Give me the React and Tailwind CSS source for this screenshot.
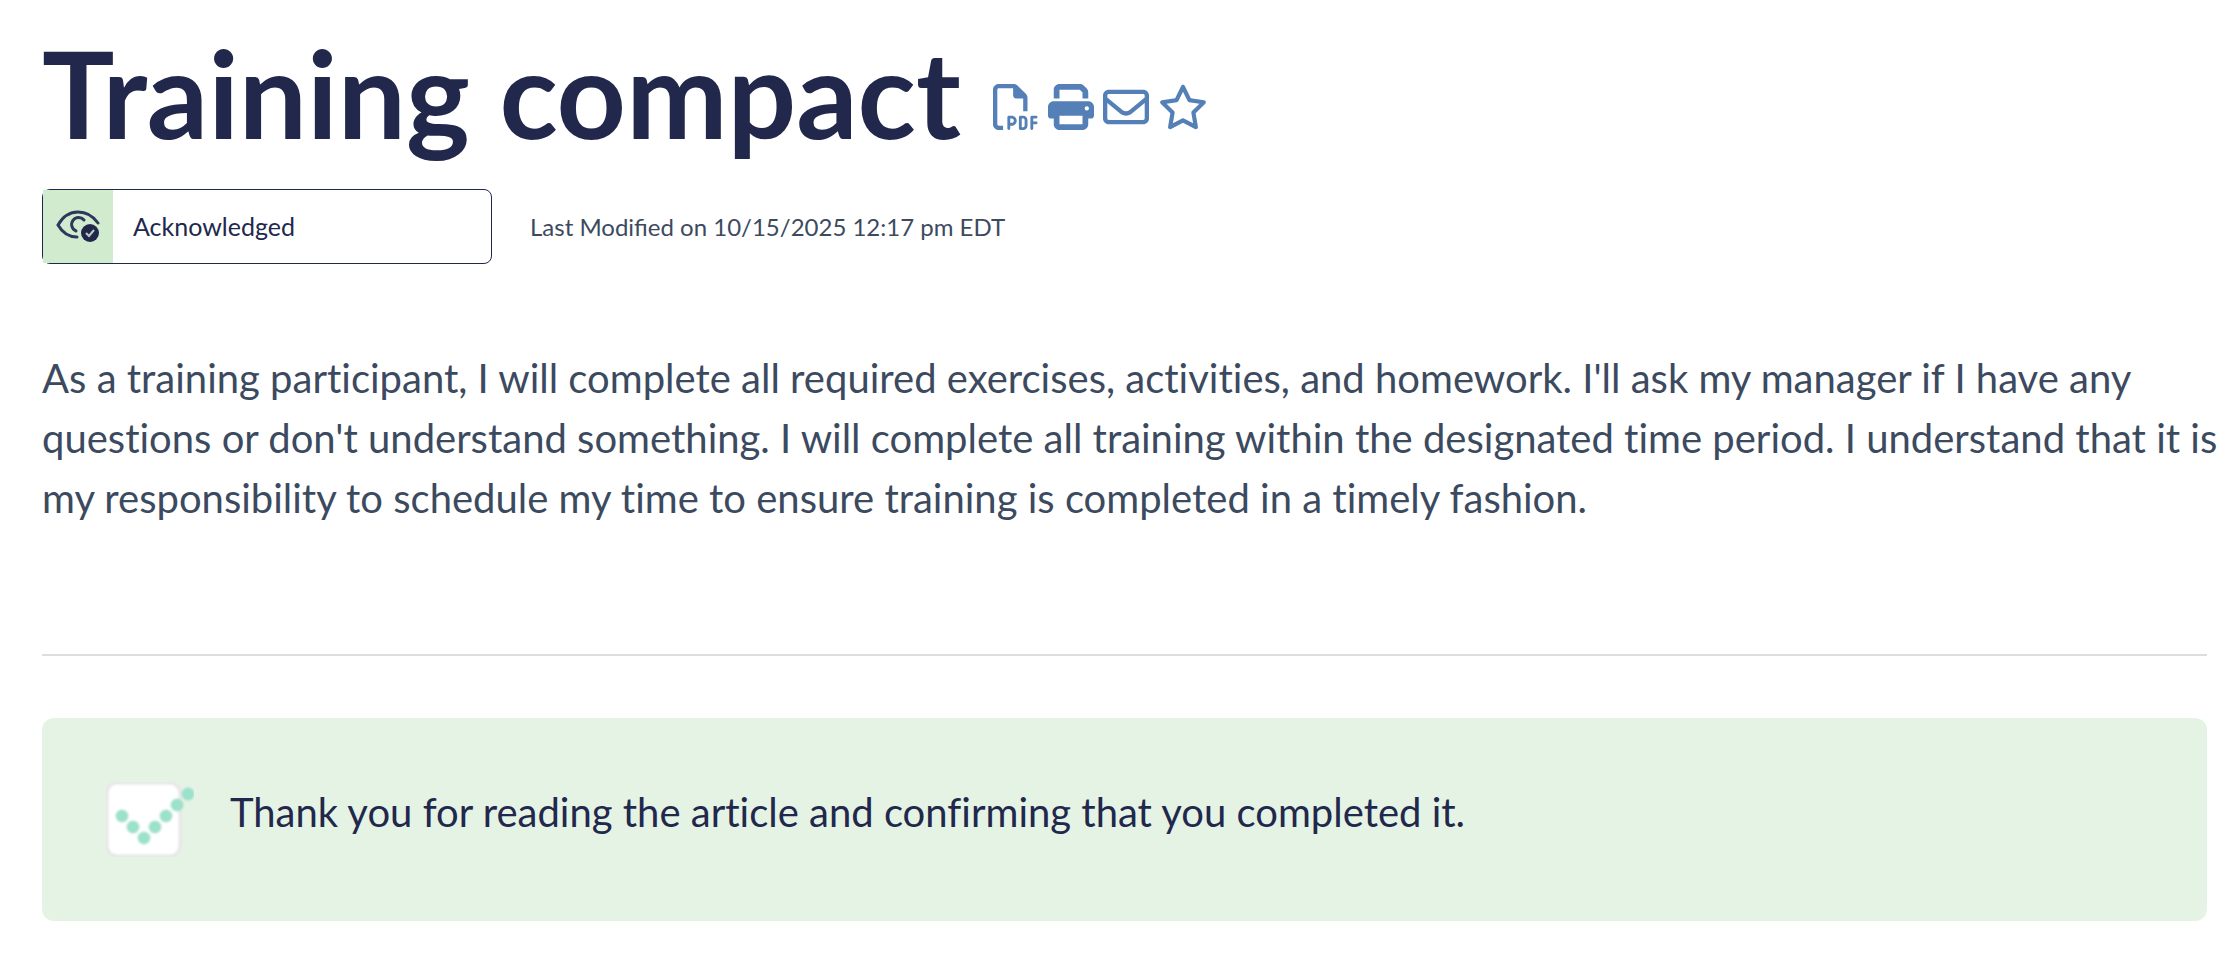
import React from 'react';
import { FaPrint, FaRegEnvelope, FaRegFilePdf, FaRegStar } from 'react-icons/fa6';

const actions = [
  { label: 'Download PDF', icon: FaRegFilePdf, size: 'w-[46px] h-[46px]' },
  { label: 'Print', icon: FaPrint, size: 'w-[46px] h-[46px]' },
  { label: 'Email', icon: FaRegEnvelope, size: 'w-[46px] h-[46px]' },
  { label: 'Add to favorites', icon: FaRegStar, size: 'w-[50px] h-[46px]' },
];

const EyeCheckIcon = () => (
  <svg width="44" height="34" viewBox="0 0 44 34" fill="none" aria-hidden="true">
    <defs>
      <filter id="eye-soft">
        <feGaussianBlur stdDeviation="0.6" />
      </filter>
    </defs>
    <g filter="url(#eye-soft)">
      <g stroke="#2f375b" strokeWidth="3" strokeLinecap="round">
        <path d="M42 13C37 6 30 2 22 2C13 2 6 8 2 15C6 22 13 27 21 27" />
        <path d="M28 10A7 7 0 1 0 20 21" />
      </g>
      <circle cx="34" cy="23" r="9" fill="#22284c" />
      <path d="M30 23L33 26L38 20" stroke="#b5cfc0" strokeWidth="2" />
    </g>
  </svg>
);

const checkDots = [
  [16, 34],
  [27, 45],
  [38, 56],
  [49, 45],
  [60, 34],
  [71, 23],
  [82, 12],
];

const CheckboxIcon = () => (
  <svg width="88" height="75" viewBox="0 0 88 75" className="shrink-0" aria-hidden="true">
    <defs>
      <filter id="check-soft">
        <feGaussianBlur stdDeviation="0.9" />
      </filter>
    </defs>
    <g filter="url(#check-soft)">
      <rect x="1" y="1" width="73" height="73" rx="10" fill="#fff" stroke="#e6e6e6" strokeWidth="3" />
      {checkDots.map(([x, y]) => (
        <circle key={x} cx={x} cy={y} r="6.5" fill="#9be1cb" />
      ))}
    </g>
  </svg>
);

export default function App() {
  return (
    <main className="bg-white pt-[22px] pr-[22px] pb-11 pl-[42px] font-['Lato',sans-serif] text-[#3c4a60]">
      <header className="flex items-center gap-8">
        <h1 className="text-[121px] leading-[142px] font-bold text-[#22284c]">Training compact</h1>
        <div className="flex items-center gap-[9px] pt-7 text-[#5480b7]">
          {actions.map(({ label, icon: Icon, size }) => (
            <button key={label} type="button" aria-label={label}>
              <Icon className={size} />
            </button>
          ))}
        </div>
      </header>

      <div className="mt-[25px] flex items-center gap-[38px]">
        <div className="flex h-[75px] w-[450px] items-center rounded-lg border border-[#22284c] text-[25px] text-[#22284c]">
          <span className="flex h-full w-[70px] items-center justify-center bg-[#d0ebcd]">
            <EyeCheckIcon />
          </span>
          <span className="ml-5">Acknowledged</span>
        </div>
        <p className="text-2xl">Last Modified on 10/15/2025 12:17 pm EDT</p>
      </div>

      <p className="mt-[84px] -mr-3 text-[40px] leading-[60px] [font-variant-ligatures:none]">
        As a training participant, I will complete all required exercises, activities, and homework. I'll ask my
        manager if I have any questions or don't understand something. I will complete all training within the
        designated time period. I understand that it is my responsibility to schedule my time to ensure training is
        completed in a timely fashion.
      </p>

      <hr className="mt-[126px] border-t-2 border-[#dddddd]" />

      <section className="mt-[62px] flex items-start gap-9 rounded-xl bg-[#e5f3e5] p-16">
        <CheckboxIcon />
        <p className="text-[40px] leading-[60px] text-[#22284c] [font-variant-ligatures:none]">
          Thank you for reading the article and confirming that you completed it.
        </p>
      </section>
    </main>
  );
}
